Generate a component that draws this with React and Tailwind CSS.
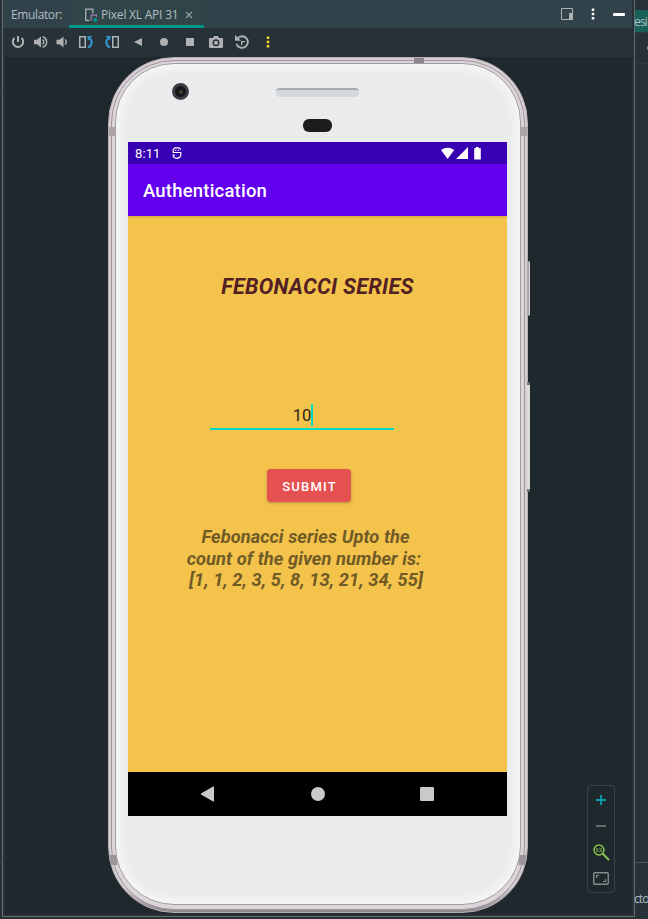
const uiFont = "font-['Open_Sans','Noto_Sans',sans-serif]";

function PowerIcon() {
  return (
    <svg width="14" height="14" viewBox="0 0 14 14" fill="none" stroke="#afb1b3" strokeWidth="2">
      <path d="M7 1v6" />
      <path d="M3.4 3a5.2 5.2 0 1 0 7.2 0" />
    </svg>
  );
}

function VolumeUpIcon() {
  return (
    <svg width="14" height="14" viewBox="0 0 14 14">
      <path d="M0 4.800h3L7 1.500v11L3 9.200H0z" fill="#afb1b3" />
      <path d="M8.600 4.600c1.500 1.300 1.500 3.500 0 4.800M8.600 1.800c5.400 1.600 5.400 8.800 0 10.400" fill="none" stroke="#afb1b3" strokeWidth="1.500" />
    </svg>
  );
}

function VolumeDownIcon() {
  return (
    <svg width="12" height="14" viewBox="0 0 12 14">
      <path d="M0.500 4.800h3L7.500 1.500v11L3.500 9.200h-3z" fill="#afb1b3" />
      <path d="M9 4.500c1.700 1.300 1.700 3.700 0 5" fill="none" stroke="#afb1b3" strokeWidth="1.500" />
    </svg>
  );
}

function RotateIcon({ mirrored = false }) {
  return (
    <svg width="14" height="14" viewBox="0 0 14 14" className={mirrored ? "-scale-x-100" : ""} fill="none">
      <path d="M0.750 1.750h5.500v10.500H0.750z" stroke="#afb1b3" strokeWidth="1.500" />
      <path d="M9 12.500c4.700-2.200 4.400-6.800 1.700-9.300" stroke="#3592c4" strokeWidth="2.200" />
      <path d="M8.300 1h5.200l-4.700 4.800z" fill="#3592c4" />
    </svg>
  );
}

function CameraIcon() {
  return (
    <svg width="14" height="12" viewBox="0 0 14 12">
      <path fillRule="evenodd" fill="#afb1b3" d="M1 2h3l1-2h4l1 2h3q1 0 1 1v8q0 1-1 1H1q-1 0-1-1V3q0-1 1-1zM7 3.200a3.500 3.500 0 1 0 0 7a3.500 3.500 0 0 0 0-7z" />
      <circle cx="7" cy="6.700" r="2" fill="#afb1b3" />
    </svg>
  );
}

function HistoryIcon() {
  return (
    <svg width="14" height="14" viewBox="0 0 14 14" fill="none" stroke="#afb1b3">
      <path d="M2.500 3.500a5.800 5.800 0 1 1-1 5.200" strokeWidth="1.900" />
      <path d="M0 0v5.800h6z" fill="#afb1b3" stroke="none" />
      <path d="M6.700 10V6.700H10" strokeWidth="1.300" />
    </svg>
  );
}

function DotsIcon({ color }) {
  return (
    <svg width="4" height="12" viewBox="0 0 4 12" fill={color}>
      <path d="M0.750 0.500h2.500v2.500H0.750zM0.750 4.750h2.500v2.500H0.750zM0.750 9h2.500v2.500H0.750z" />
    </svg>
  );
}

function Header() {
  return (
    <div className="flex h-7 shrink-0 bg-[#32424a] pl-2">
      <span className="w-[58px] pt-[6px] text-[12px] leading-[18px] tracking-[-0.380px] whitespace-nowrap text-[#b0bec5]">Emulator:</span>
      <div className="flex w-[135px] items-center border-b-[3px] border-[#009688] bg-[#304548] pt-[4px] pl-[15px]">
        <svg width="14" height="14" viewBox="0 0 14 14" fill="none" className="shrink-0">
          <path d="M5.500 12.300H1.700V1.200h7.100v4" stroke="#afb1b3" strokeWidth="1.300" />
          <path d="M8 11.800h-.8V7.200h5.300V9" stroke="#a177b8" strokeWidth="1.200" />
          <circle cx="11.300" cy="12" r="1.900" fill="#009688" />
        </svg>
        <span className="ml-[3px] w-[84px] text-[12px] leading-[18px] tracking-[-0.220px] whitespace-nowrap text-[#b0bec5]">Pixel XL API 31</span>
        <svg width="8" height="8" viewBox="0 0 8 8" stroke="#94a2a9" strokeWidth="1.100" className="shrink-0">
          <path d="M1 1l6 6M7 1L1 7" />
        </svg>
      </div>
      <div className="flex flex-1 items-center justify-end pr-[7px]">
        <svg width="12" height="12" viewBox="0 0 12 12">
          <path d="M.5.500h11v11H.5z" fill="none" stroke="#afb1b3" />
          <path d="M8 5h4v7H8z" fill="#afb1b3" />
        </svg>
        <div className="mr-[18px] ml-[18px] flex"><DotsIcon color="#ffffff" /></div>
        <div className="h-[3px] w-[12px] rounded-[1px] bg-white" />
      </div>
    </div>
  );
}

function Toolbar() {
  return (
    <div className="flex h-[29px] shrink-0 items-center bg-[#263238] pb-px pl-2">
      <div className="w-[23px]"><PowerIcon /></div>
      <div className="w-[22px]"><VolumeUpIcon /></div>
      <div className="w-[23px]"><VolumeDownIcon /></div>
      <div className="w-[26px]"><RotateIcon /></div>
      <div className="w-[29px]"><RotateIcon mirrored /></div>
      <div className="w-[26px]">
        <svg width="8" height="8" viewBox="0 0 8 8"><path d="M8 0v8L0 4z" fill="#afb1b3" /></svg>
      </div>
      <div className="w-[26px]"><div className="size-2 rounded-full bg-[#afb1b3]" /></div>
      <div className="w-[23px]"><div className="size-2 bg-[#afb1b3]" /></div>
      <div className="w-[26px]"><CameraIcon /></div>
      <div className="w-[31px]"><HistoryIcon /></div>
      <DotsIcon color="#fdd428" />
    </div>
  );
}

function StatusBar() {
  return (
    <div className="flex h-[22px] items-center bg-[#3700b3] pl-[7px] text-white">
      <span className="w-[37px] pt-px text-[13px] leading-[21px] tracking-[0.100px]">8:11</span>
      <svg width="10" height="12" viewBox="0 0 10 12" fill="none" stroke="#fff" strokeWidth="1.200">
        <path d="M9 5.500H1.200V2.600L2.700.8h4.600l1.500 1.800M3.200 3.400h1.100M5.800 3.400h1.100M3.500 5.500H8.800v2.300q0 3-3.800 3.500Q1.200 11 1.200 8H3" />
      </svg>
      <svg width="41" height="13" viewBox="0 0 41 13" fill="#fff" className="ml-[259px]">
        <path d="M0 3Q6.500-1.700 13.200 3L6.600 12zM27 0v12H15zM33.200 1.200h1.600V0h2.800v1.200h2.200v11.300h-6.600z" />
      </svg>
    </div>
  );
}

function NavBar() {
  return (
    <div className="flex h-11 shrink-0 items-center bg-black pl-[72px]">
      <svg width="14" height="16" viewBox="0 0 14 16" className="mr-[96.500px]">
        <path d="M13.500.8v14.400L1 8z" fill="#c9c9c9" stroke="#c9c9c9" strokeLinejoin="round" />
      </svg>
      <div className="mr-[95.500px] size-[14px] rounded-full bg-[#c9c9c9]" />
      <div className="size-[14px] rounded-[1px] bg-[#c9c9c9]" />
    </div>
  );
}

function Screen() {
  return (
    <div className="flex h-[674px] w-[379px] flex-col overflow-hidden font-[Roboto,sans-serif]">
      <StatusBar />
      <div className="z-10 flex h-[52px] shrink-0 items-center bg-[#6200ee] pt-[3px] pl-[15px] shadow-[0_1px_2px_rgba(0,0,0,0.150)]">
        <h1 className="text-[18.500px] font-medium tracking-[0.200px] text-white">Authentication</h1>
      </div>
      <div className="flex flex-1 flex-col bg-[#f4c34c]">
        <h2 className="mt-[58px] h-[26px] text-center text-[21.700px] leading-[26px] font-bold tracking-[0.250px] whitespace-nowrap text-[#521f24] italic">FEBONACCI SERIES</h2>
        <div className="mt-[104px] ml-[82px] flex h-[26px] w-[184px] items-start justify-center border-b-2 border-[#03dac5] pl-[2px]">
          <span className="text-[16.500px] leading-[23px] text-[#28231a]">10</span>
          <span className="h-[22px] w-[2px] bg-[#03dac5]" />
        </div>
        <button className="mt-[39px] ml-[139px] h-[33px] w-[84px] rounded-[4px] bg-[#e55050] pt-[2px] pl-px text-[13px] font-medium tracking-[1.200px] text-white shadow-[0_1px_3px_rgba(0,0,0,0.25)]">SUBMIT</button>
        <div className="mt-[24px] ml-[57px] w-[240px] text-center text-[18.300px] leading-[21.500px] font-bold tracking-[0.060px] whitespace-nowrap text-[#705a26] italic">
          <p className="pl-px">Febonacci series Upto the</p>
          <p className="pr-[2px]">count of the given number is:</p>
          <p className="pl-[2px]">[1, 1, 2, 3, 5, 8, 13, 21, 34, 55]</p>
        </div>
      </div>
      <NavBar />
    </div>
  );
}

function Phone() {
  return (
    <div className="relative ml-[103px] h-[856px] w-[420px] shrink-0 rounded-[66px] border border-[#b8b0b5] bg-[linear-gradient(#d8ced3_0%,#d5ced2_97%,#8e858a_100%)] p-[2px]">
      <div className="h-full rounded-[63px] border border-[#9d969b] bg-[#dcd6da] px-[3px] pt-[2px] pb-[4px]">
        <div className="h-full rounded-[59px] border border-[#a29da2] bg-[#eaebed] px-[12px] shadow-[inset_0_0_9px_5px_#f6f6f8]">
          <div className="h-[78px] pl-[44px]">
            <div className="flex items-start pt-[19px]">
              <div className="flex size-[17px] items-center justify-center rounded-full border-[3px] border-[#3d3e42] bg-[#17171a]">
                <div className="size-[4px] rounded-full bg-[#44402c]" />
              </div>
              <div className="mt-[5px] ml-[87px] h-[9px] w-[83px] rounded-[4px] border-t-2 border-[#a6abb3] bg-[#d6d9dc]" />
            </div>
            <div className="mt-[19px] ml-[131px] h-[13px] w-[29px] rounded-[6px] bg-[#1c1c1f]" />
          </div>
          <Screen />
        </div>
      </div>
      <div className="absolute top-0 left-[305px] h-[5px] w-[10px] bg-[#8b868a]" />
      <div className="absolute top-[69px] left-0 h-[9px] w-[7px] bg-[#aaa4a9]" />
      <div className="absolute top-[69px] right-0 h-[9px] w-[7px] bg-[#aaa4a9]" />
      <div className="absolute top-[797px] left-[1px] h-[10px] w-[7px] skew-x-6 bg-[#9c969b]" />
      <div className="absolute top-[797px] right-[1px] h-[10px] w-[7px] -skew-x-6 bg-[#9c969b]" />
      <div className="absolute top-[203px] -right-[3px] h-[55px] w-[3px] rounded-r-[2px] border-r border-[#d5d3d3] bg-[#aaa6a9]" />
      <div className="absolute top-[324px] -right-[3px] h-[110px] w-[3px] rounded-r-[2px] border-y-[3px] border-[#77777a] bg-[#dcdddb]" />
    </div>
  );
}

function ZoomControls() {
  return (
    <div className="mb-[21px] ml-[59px] grid h-[108px] w-[28px] grid-rows-[26px_26px_26px_26px] place-items-center self-end rounded-[4px] border border-[#34444c] pt-px">
      <svg width="10" height="10" viewBox="0 0 10 10" stroke="#0d9bb0" strokeWidth="1.800"><path d="M0 5h10M5 0v10" /></svg>
      <div className="h-[2px] w-[10px] bg-[#656a6c]" />
      <svg width="17" height="17" viewBox="0 0 17 17" fill="none" stroke="#8bc34a">
        <circle cx="6" cy="6" r="4.900" strokeWidth="1.500" />
        <path d="M9.500 9.500l6.500 6.500" strokeWidth="2" />
        <path d="M4 4v4M6 4.500v1M6 7v1M8 4v4" />
      </svg>
      <svg width="16" height="13" viewBox="0 0 16 13" fill="none" stroke="#85898b">
        <rect x="0.750" y="0.750" width="14.500" height="11.500" rx="1" strokeWidth="1.400" />
        <path d="M3.500 6V3.500H6M12.500 7v2.500H10" strokeWidth="1.200" />
      </svg>
    </div>
  );
}

export default function App() {
  return (
    <div className={`flex h-[919px] w-[648px] overflow-hidden bg-[#263238] ${uiFont}`}>
      <div className="w-[2px] shrink-0 pt-[93px]">
        <div className="h-[770px] border-y border-[#3b484e]" />
      </div>
      <div className="mb-[2px] flex w-[633px] shrink-0 flex-col border-x border-b border-[#696b6c]">
        <div className="flex min-h-0 flex-1 flex-col border-r-2 border-[#263238]">
          <Header />
          <Toolbar />
          <div className="mb-[2px] flex min-h-0 flex-1 border-l-2 border-[#263238] bg-[#1f282d]">
            <Phone />
            <ZoomControls />
          </div>
        </div>
      </div>
      <div className="flex flex-1 flex-col text-[12px] whitespace-nowrap text-[#b0bec5]">
        <div className="mt-[10px] h-[22px] bg-[#176159] leading-[24px] tracking-[-0.800px]">
          <span className="-ml-px">esi</span>
        </div>
        <div className="flex h-[32px] items-center justify-end border-y border-[#303c42]">
          <div className="h-1 w-[2px] rounded-l-full bg-[#9aa5aa]" />
        </div>
        <div className="h-[799px] border-b border-[#46535a]" />
        <div className="mt-[27px] leading-[18px] tracking-[-0.900px]">
          <span className="-ml-px">cto</span>
        </div>
      </div>
    </div>
  );
}
